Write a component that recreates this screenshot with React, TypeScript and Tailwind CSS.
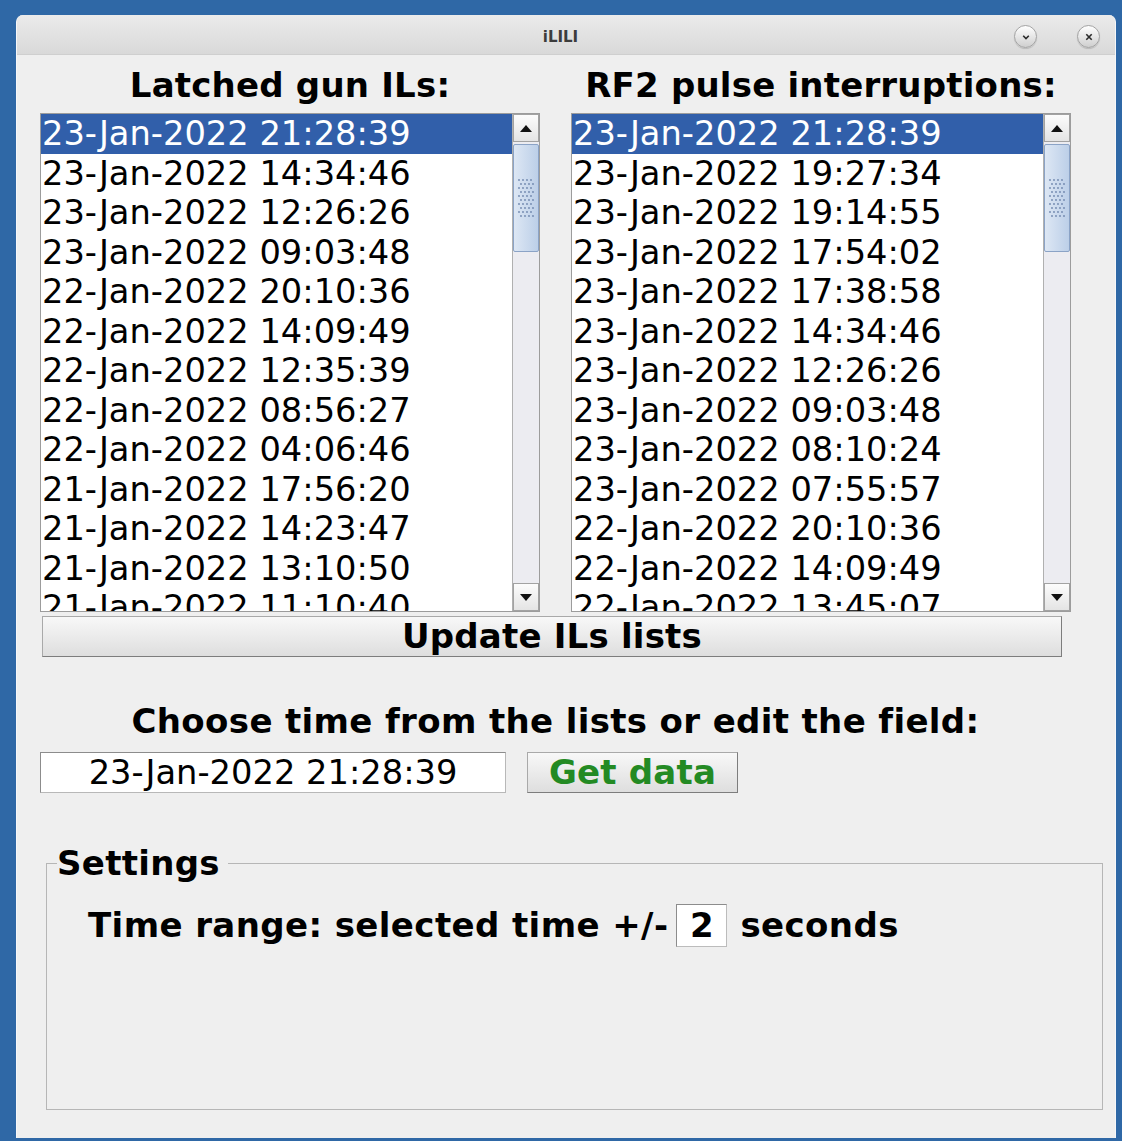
import React from "react";

const gunILs = [
  "23-Jan-2022 21:28:39",
  "23-Jan-2022 14:34:46",
  "23-Jan-2022 12:26:26",
  "23-Jan-2022 09:03:48",
  "22-Jan-2022 20:10:36",
  "22-Jan-2022 14:09:49",
  "22-Jan-2022 12:35:39",
  "22-Jan-2022 08:56:27",
  "22-Jan-2022 04:06:46",
  "21-Jan-2022 17:56:20",
  "21-Jan-2022 14:23:47",
  "21-Jan-2022 13:10:50",
  "21-Jan-2022 11:10:40",
];

const rfInterruptions = [
  "23-Jan-2022 21:28:39",
  "23-Jan-2022 19:27:34",
  "23-Jan-2022 19:14:55",
  "23-Jan-2022 17:54:02",
  "23-Jan-2022 17:38:58",
  "23-Jan-2022 14:34:46",
  "23-Jan-2022 12:26:26",
  "23-Jan-2022 09:03:48",
  "23-Jan-2022 08:10:24",
  "23-Jan-2022 07:55:57",
  "22-Jan-2022 20:10:36",
  "22-Jan-2022 14:09:49",
  "22-Jan-2022 13:45:07",
];

function ArrowButton({ down }: { down?: boolean }) {
  return (
    <div className="h-[28px] flex items-center justify-center border border-[#a2a2a2] bg-gradient-to-b from-[#fcfcfc] to-[#e4e4e4]">
      <svg width="12" height="7" viewBox="0 0 12 7">
        <path d={down ? "M0 0h12L6 7z" : "M6 0l6 7H0z"} fill="#111" />
      </svg>
    </div>
  );
}

// little diamond grip drawn on the scroll thumb
function Grip() {
  const dots = [];
  for (let r = 0; r < 10; r++) {
    for (let c = 0; c < 4; c++) {
      dots.push(
        <circle key={`${r}-${c}`} cx={2 + c * 4 + (r % 2) * 2} cy={2 + r * 4} r={0.9} fill="#6f87ad" />
      );
    }
  }
  return (
    <svg width="18" height="40" viewBox="0 0 18 40">
      {dots}
    </svg>
  );
}

function ScrollBar() {
  return (
    <div className="w-[27px] flex flex-col bg-[#ececf1] border-l border-[#b0b0b0]">
      <ArrowButton />
      <div className="mt-[2px] h-[108px] flex items-center justify-center border border-[#8ba3c6] rounded-[2px] bg-gradient-to-r from-[#dde7f4] to-[#bccfe8]">
        <Grip />
      </div>
      <div className="flex-1" />
      <ArrowButton down />
    </div>
  );
}

function TimeList({ items }: { items: string[] }) {
  return (
    <div className="w-[500px] h-[499px] flex border border-[#9c9c9c] bg-white">
      <div className="flex-1 overflow-hidden">
        {items.map((t, i) => (
          <div
            key={t + i}
            className={
              "h-[39.5px] leading-[39.5px] pl-[1px] whitespace-nowrap text-[33.7px] " +
              (i === 0 ? "bg-[#315faa] text-white" : "text-black")
            }
          >
            {t}
          </div>
        ))}
      </div>
      <ScrollBar />
    </div>
  );
}

function TitleButton({ children }: { children: React.ReactNode }) {
  return (
    <div className="w-[23px] h-[23px] rounded-full border border-[#a3a3a3] bg-gradient-to-b from-[#ffffff] to-[#cfcfcf] flex items-center justify-center shadow-[0_1px_1px_rgba(0,0,0,0.15)]">
      {children}
    </div>
  );
}

export default function App() {
  return (
    <div className="w-[1122px] h-[1141px] bg-[#2f68a6] pt-[15px] pl-[16px] pr-[6px] pb-[3px] font-['DejaVu_Sans',sans-serif] text-black">
      <div className="h-full flex flex-col rounded-t-[7px] bg-[#efefef] border-x border-[#f6f7f9] overflow-hidden">
        {/* title bar */}
        <div className="h-[40px] flex items-center bg-gradient-to-b from-[#ebebeb] to-[#d9d9d9] border-b border-[#cfcfcf]">
          <div className="w-[90px]" />
          <div className="flex-1 text-center text-[15px] font-bold text-[#3c3c3c] pt-[5px]">iLILI</div>
          <div className="w-[101px] flex items-center gap-[40px] pt-[4px]">
            <TitleButton>
              <svg width="12" height="12" viewBox="0 0 12 12">
                <path d="M3.2 4.8L6 7.6l2.8-2.8" fill="none" stroke="#2a2a2a" strokeWidth="1.6" />
              </svg>
            </TitleButton>
            <TitleButton>
              <svg width="12" height="12" viewBox="0 0 12 12">
                <path d="M3.3 3.3l5.4 5.4M8.7 3.3l-5.4 5.4" fill="none" stroke="#2a2a2a" strokeWidth="1.6" />
              </svg>
            </TitleButton>
          </div>
        </div>

        <div className="flex-1 pl-[23px] pt-[10px]">
          <div className="w-[1031px]">
            <div className="flex gap-[31px]">
              <div className="w-[500px] flex flex-col">
                <div className="h-[40px] leading-[40px] mb-[8px] text-center text-[34px] font-bold tracking-[0.2px]">
                  Latched gun ILs:
                </div>
                <TimeList items={gunILs} />
              </div>
              <div className="w-[500px] flex flex-col">
                <div className="h-[40px] leading-[40px] mb-[8px] text-center text-[34px] font-bold tracking-[0.2px] whitespace-nowrap">
                  RF2 pulse interruptions:
                </div>
                <TimeList items={rfInterruptions} />
              </div>
            </div>

            <button className="mt-[4px] ml-[2px] w-[1020px] h-[41px] border border-[#a9a9a9] border-r-[#7d7d7d] border-b-[#7d7d7d] bg-gradient-to-b from-[#f8f8f8] to-[#dedede] text-[34px] leading-[39px] font-bold tracking-[0.2px]">
              Update ILs lists
            </button>

            <div className="mt-[44px] h-[40px] leading-[40px] text-center text-[34px] font-bold tracking-[0.35px] whitespace-nowrap">
              Choose time from the lists or edit the field:
            </div>

            <div className="mt-[11px] flex items-center gap-[21px]">
              <div className="w-[466px] h-[41px] border border-[#8c8c8c] border-r-[#b8b8b8] border-b-[#b8b8b8] bg-white text-center text-[33.7px] leading-[39px]">
                23-Jan-2022 21:28:39
              </div>
              <button className="w-[211px] h-[41px] border border-[#a9a9a9] border-r-[#7d7d7d] border-b-[#7d7d7d] bg-gradient-to-b from-[#f8f8f8] to-[#dedede] text-[34px] leading-[39px] font-bold text-[#238a23] tracking-[0.2px]">
                Get data
              </button>
            </div>
          </div>

          <fieldset className="mt-[50px] ml-[6px] w-[1057px] h-[267px] border border-[#b6b6b6]">
            <legend className="ml-[10px] pr-[8px] text-[34px] leading-[40px] font-bold tracking-[0.3px]">Settings</legend>
            <div className="mt-[21px] pl-[41px] flex items-center h-[43px] text-[34px] font-bold tracking-[0.4px] whitespace-nowrap">
              <span>Time range: selected time +/-</span>
              <div className="ml-[8px] w-[51px] h-[43px] border border-[#8c8c8c] border-r-[#bcbcbc] border-b-[#bcbcbc] bg-white text-center leading-[41px]">
                2
              </div>
              <span className="ml-[13px]">seconds</span>
            </div>
          </fieldset>
        </div>
      </div>
    </div>
  );
}
